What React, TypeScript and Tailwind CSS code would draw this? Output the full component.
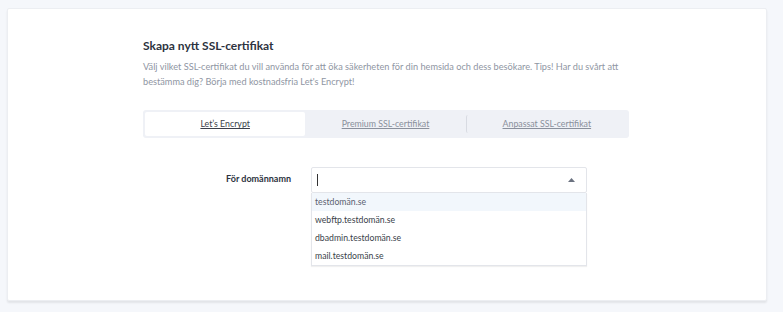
import React from 'react';

const TABS = ['Let\u2019s Encrypt', 'Premium SSL-certifikat', 'Anpassat SSL-certifikat'];
const DOMAINS = ['testdomän.se', 'webftp.testdomän.se', 'dbadmin.testdomän.se', 'mail.testdomän.se'];

export default function App() {
  return (
    <div className="min-h-[312px] w-[783px] bg-[#f5f7fb] pt-2 pl-[7px] pr-4 pb-[10px]" style={{ fontFamily: 'Lato, "Open Sans", sans-serif' }}>
      <div className="h-[293px] w-[760px] border border-[#eceef2] bg-white shadow-[0_2px_2px_rgba(0,0,0,0.08)] rounded-[2px]">
        <div className="ml-[135px] w-[486px] pt-[28px]">
          <h2 className="text-[12px] font-bold leading-[18px] text-[#2d3340]">Skapa nytt SSL-certifikat</h2>
          <p className="mt-[4px] text-[9.2px] leading-[15px] text-[#8f96a3]">
            Välj vilket SSL-certifikat du vill använda för att öka säkerheten för din hemsida och dess besökare. Tips! Har du svårt att bestämma dig? Börja med kostnadsfria Let's Encrypt!
          </p>

          <div className="mt-[21px] flex h-[28px] rounded-[3px] bg-[#eff1f6] p-[2px]">
            {TABS.map((t, i) => (
              <div
                key={t}
                className={`flex flex-1 items-center justify-center rounded-[2px] text-[8.8px] underline ${
                  i === 0 ? 'bg-white text-[#3a3f4a]' : 'text-[#8a909c]'
                } ${i === 2 ? 'border-l border-[#d8dbe2] my-[3px]' : ''}`}
              >
                {t}
              </div>
            ))}
          </div>

          <div className="mt-[29px] flex items-start">
            <div className="w-[149px] pt-[5px] pr-[1px] text-right text-[9px] font-bold text-[#2d3340]">För domännamn</div>
            <div className="ml-[19px] w-[276px]">
              <div className="flex h-[26px] items-center justify-between rounded-[2px] border border-[#e3e5ea] pl-[5px] pr-[11px]">
                <span className="h-[12px] w-px bg-[#333]" />
                <svg width="7" height="4" viewBox="0 0 7 4"><path d="M0 4L3.5 0L7 4Z" fill="#6b7280" /></svg>
              </div>
              <div className="border border-t-0 border-[#e3e5ea] shadow-[0_1px_1px_rgba(0,0,0,0.06)]">
                {DOMAINS.map((d, i) => (
                  <div key={d} className={`flex h-[18px] items-center px-[3px] text-[8.7px] ${i === 0 ? 'bg-[#f2f7fc] text-[#5b6270]' : 'text-[#3a3f4a]'}`}>
                    {d}
                  </div>
                ))}
              </div>
            </div>
          </div>
        </div>
      </div>
    </div>
  );
}
